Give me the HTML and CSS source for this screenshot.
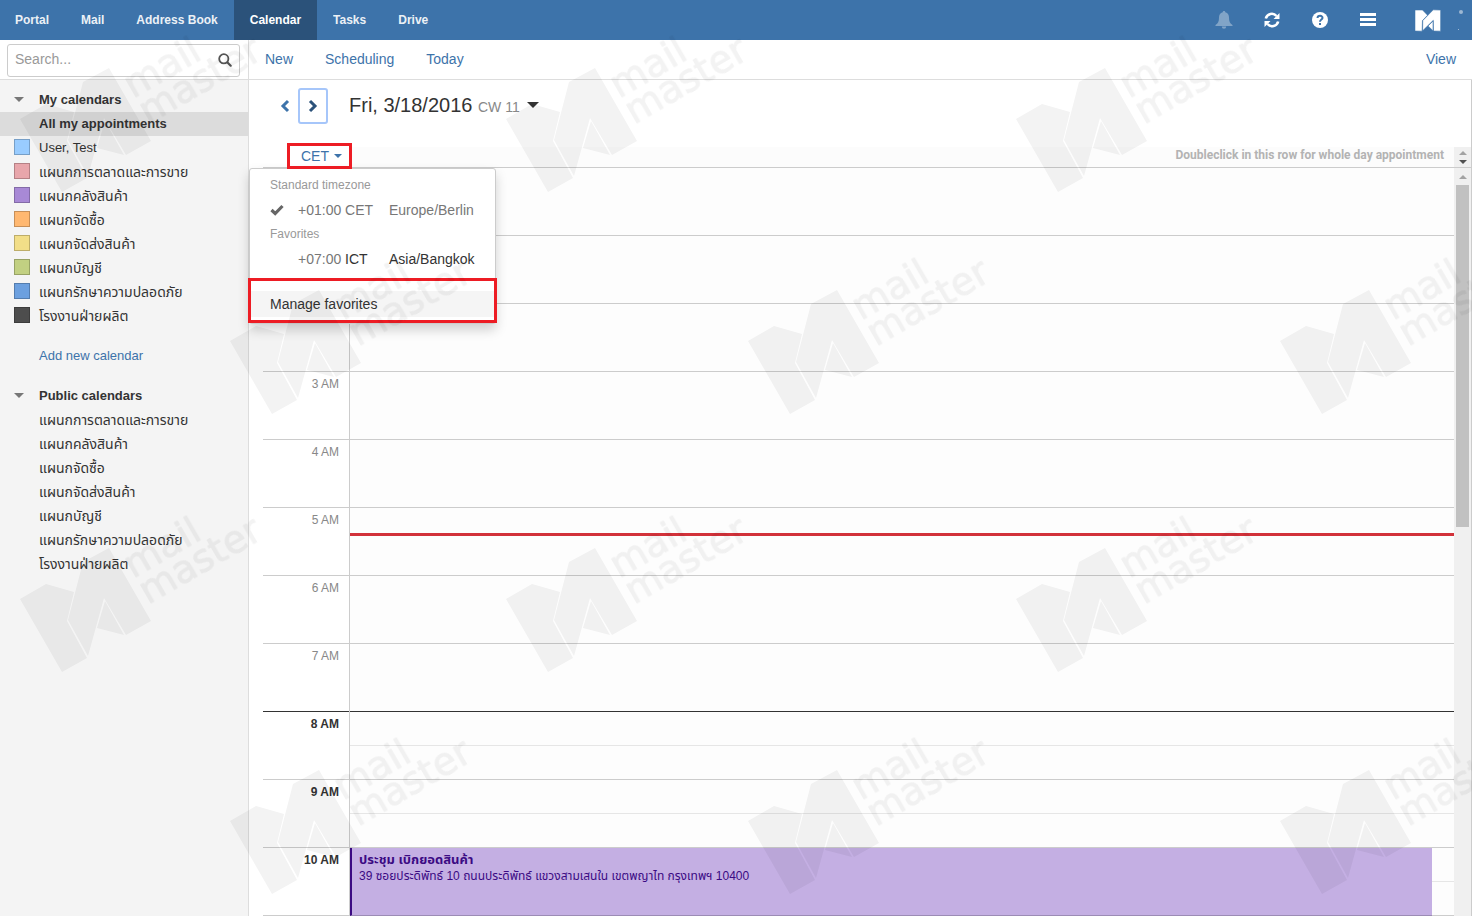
FILE: index.html
```html
<!DOCTYPE html>
<html lang="en">
<head>
<meta charset="utf-8">
<title>Calendar</title>
<link rel="stylesheet" href="styles.css">
</head>
<body>
<header class="topbar">
  <nav class="apps">
    <a href="#">Portal</a><a href="#">Mail</a><a href="#">Address Book</a><a href="#" class="active">Calendar</a><a href="#">Tasks</a><a href="#">Drive</a>
  </nav>
  <div class="tools">
    <button class="tool dim" aria-label="Notifications"><svg width="18" height="20" viewBox="0 0 18 20"><path fill="#fff" d="M9 1c.8 0 1.300.5 1.300 1.200C13 3 14 5 14 7.500c0 4 1 6 3.500 7.500v1H.5v-1C3 13.500 4 11.500 4 7.500 4 5 5 3 7.700 2.200 7.700 1.500 8.200 1 9 1zM6.800 16.500h4.400a2.200 2.200 0 0 1-4.400 0z"/></svg></button>
    <button class="tool" aria-label="Refresh"><svg width="16" height="16" viewBox="0 0 16 16"><path fill="none" stroke="#fff" stroke-width="2.600" d="M1.800 6.500A6.200 6.200 0 0 1 12.500 4M14.200 9.500A6.200 6.200 0 0 1 3.500 12"/><path fill="#fff" d="M15.500 1v6h-6zM.5 15V9h6z"/></svg></button>
    <button class="tool" aria-label="Help"><svg width="16" height="16" viewBox="0 0 16 16"><circle cx="8" cy="8" r="8" fill="#fff"/><path fill="none" stroke="#3d73aa" stroke-width="2" d="M5.500 6C5.700 3 10.800 3.200 10.500 6 10.400 7.700 8 7.500 8 9.800"/><path fill="#3d73aa" d="M7 11h2v2H7z"/></svg></button>
    <button class="tool" aria-label="Menu"><svg width="16" height="14" viewBox="0 0 16 14"><path fill="#fff" d="M0 0h16v3H0zM0 5h16v3H0zM0 10h16v3H0z"/></svg></button>
    <svg class="brand" width="50" height="40" viewBox="0 0 50 40"><path transform="translate(0 10) rotate(30) scale(.25)" fill="#fff" stroke="#3d73aa" stroke-width="2" d="M0 0l26-15 28 8-7 29 20 37-25 14zM63-37l26-14 42 73-25 14L84-1 68 57 48 21zM85 2l19 34-27-7z"/><circle cx="46" cy="12" r="2" fill="#9db8d3"/><path fill="#9db8d3" d="M43 29h1v1h-1z"/></svg>
  </div>
</header>

<div class="layout">
  <aside class="sidebar">
    <form class="search">
      <input type="search" placeholder="Search..." aria-label="Search">
      <svg width="14" height="14" viewBox="0 0 14 14"><circle cx="5.800" cy="5.800" r="4.600" fill="none" stroke="#555" stroke-width="1.800"/><path stroke="#555" stroke-width="2.200" stroke-linecap="round" d="M9.500 9.500l3.200 3.200"/></svg>
    </form>
    <div class="folders">
      <h2><i class="caret"></i>My calendars</h2>
      <ul>
        <li class="selected"><b>All my appointments</b></li>
        <li><i class="swatch blue"></i>User, Test</li>
        <li class="th"><i class="swatch pink"></i>แผนกการตลาดและการขาย</li>
        <li class="th"><i class="swatch purple"></i>แผนกคลังสินค้า</li>
        <li class="th"><i class="swatch orange"></i>แผนกจัดซื้อ</li>
        <li class="th"><i class="swatch yellow"></i>แผนกจัดส่งสินค้า</li>
        <li class="th"><i class="swatch green"></i>แผนกบัญชี</li>
        <li class="th"><i class="swatch navy"></i>แผนกรักษาความปลอดภัย</li>
        <li class="th"><i class="swatch dark"></i>โรงงานฝ่ายผลิต</li>
      </ul>
      <a class="add" href="#">Add new calendar</a>
      <h2><i class="caret"></i>Public calendars</h2>
      <ul class="th">
        <li>แผนกการตลาดและการขาย</li>
        <li>แผนกคลังสินค้า</li>
        <li>แผนกจัดซื้อ</li>
        <li>แผนกจัดส่งสินค้า</li>
        <li>แผนกบัญชี</li>
        <li>แผนกรักษาความปลอดภัย</li>
        <li>โรงงานฝ่ายผลิต</li>
      </ul>
    </div>
  </aside>

  <main class="main">
    <div class="toolbar"><a href="#">New</a><a href="#">Scheduling</a><a href="#">Today</a><a href="#" class="view">View</a></div>
    <div class="datebar">
      <button class="step" aria-label="Previous day"><svg width="10" height="14" viewBox="0 0 10 14"><path fill="none" stroke="#3d73aa" stroke-width="3" d="M8 2L3 7l5 5"/></svg></button>
      <button class="step focused" aria-label="Next day"><svg width="10" height="14" viewBox="0 0 10 14"><path fill="none" stroke="#2b527a" stroke-width="3" d="M2 2l5 5-5 5"/></svg></button>
      <h1>Fri, 3/18/2016 <small>CW 11</small><i class="caret large"></i></h1>
    </div>
    <div class="allday">
      <div class="zone">
        <button class="zone-btn">CET<i class="caret link"></i></button>
        <div class="menu">
          <p class="menu-head">Standard timezone</p>
          <a href="#" class="tz muted"><svg width="14" height="12" viewBox="0 0 14 12"><path fill="none" stroke="#666" stroke-width="3.200" d="M1.500 6L5.200 9.500 12.500 2"/></svg><span class="off">+01:00 CET</span><span>Europe/Berlin</span></a>
          <p class="menu-head">Favorites</p>
          <a href="#" class="tz"><i></i><span class="off"><em>+07:00</em> ICT</span><span>Asia/Bangkok</span></a>
          <div class="manage"><a href="#">Manage favorites</a></div>
        </div>
      </div>
      <div class="hint">Doubleclick in this row for whole day appointment</div>
      <div class="spin"><i class="up"></i><i class="down"></i></div>
    </div>
    <div class="grid">
      <div class="hours">
        <div></div><div></div><div></div><div>3 AM</div><div>4 AM</div><div>5 AM</div><div>6 AM</div><div class="edge">7 AM</div><div class="work">8 AM</div><div class="work">9 AM</div><div class="work">10 AM</div>
      </div>
      <div class="day">
        <div></div><div></div><div></div><div></div><div></div><div></div><div></div><div class="edge"></div><div class="work"></div><div class="work"></div><div class="work"></div>
        <div class="now"></div>
        <article class="event th"><b>ประชุม เบิกยอดสินค้า</b><span>39 ซอยประดิพัทธ์ 10 ถนนประดิพัทธ์ แขวงสามเสนใน เขตพญาไท กรุงเทพฯ 10400</span></article>
      </div>
      <div class="scroll"><i class="up"></i><div class="thumb"></div></div>
    </div>
  </main>
</div>

<svg class="watermark" aria-hidden="true">
  <defs>
    <g id="mark">
      <path d="M0 0l26-15 28 8-7 29 20 37-25 14zM63-37l26-14 42 73-25 14L84-1 68 57 48 21zM85 2l19 34-27-7z"/>
      <g transform="rotate(-30)" class="mark-text"><text x="108" y="39">mail</text><text x="108" y="69">master</text></g>
    </g>
  </defs>
  <g opacity=".05">
    <use href="#mark" x="20" y="119"/><use href="#mark" x="506" y="119"/><use href="#mark" x="1016" y="119"/>
    <use href="#mark" x="230" y="341"/><use href="#mark" x="748" y="341"/><use href="#mark" x="1280" y="341"/>
    <use href="#mark" x="20" y="599"/><use href="#mark" x="506" y="599"/><use href="#mark" x="1016" y="599"/>
    <use href="#mark" x="230" y="821"/><use href="#mark" x="748" y="821"/><use href="#mark" x="1280" y="821"/>
  </g>
</svg>
</body>
</html>
```
FILE: styles.css
```css
* { box-sizing: border-box; }
body { margin: 0; height: 100vh; display: flex; flex-direction: column; overflow: hidden; background: #fff; color: #333; font: 14px/20px "Liberation Sans", Arial, sans-serif; }
a { color: #3d73aa; text-decoration: none; }
button { border: 0; padding: 0; background: none; font: inherit; cursor: pointer; }
ul, p, h1, h2 { margin: 0; padding: 0; list-style: none; }
.th { font-family: "Liberation Sans", Tahoma, "Noto Sans Thai", Loma, Waree, sans-serif; }

.topbar { display: flex; justify-content: space-between; height: 40px; flex: none; background: #3d73aa; }
.apps { display: flex; }
.apps a { padding: 0 16px; color: #fff; font: bold 12px/40px "Liberation Sans", Arial, sans-serif; opacity: .9; }
.apps a:first-child { padding-left: 15px; }
.apps .active { background: #2b527a; opacity: 1; }
.tools { display: flex; align-items: center; }
.tool { display: flex; justify-content: center; width: 48px; }
.dim { opacity: .35; }
.brand { margin-left: 23px; margin-right: 7px; }

.layout { display: flex; flex: 1; min-height: 0; }
.sidebar { width: 249px; flex: none; background: #f4f4f4; border-right: 1px solid #ddd; }
.search { display: flex; align-items: center; height: 40px; padding: 4px 8px 3px 7px; background: #fff; border-bottom: 1px solid #ddd; }
.search input { flex: 1; min-width: 0; height: 33px; padding: 0 30px 3px 7px; border: 1px solid #ccc; border-radius: 3px; font: inherit; background: #fff; }
.search input::placeholder { color: #999; }
.search svg { margin-left: -22px; margin-right: 8px; }
.folders { padding-top: 8px; font-size: 13px; line-height: 24px; }
.folders h2 { display: flex; align-items: center; gap: 15px; padding-left: 14px; font-size: 13px; line-height: 24px; }
.folders li { display: flex; align-items: center; height: 24px; padding-left: 39px; }
.folders .selected { background: #dcdcdc; }
.folders .th { font-size: 14px; }
.folders .add { display: block; margin: 16px 0; padding-left: 39px; }
.swatch { width: 16px; height: 16px; margin: 0 9px 2px -25px; border: 1px solid rgba(0, 0, 0, .22); }
.blue { background: #9cf; }
.pink { background: #e8a6ab; }
.purple { background: #a889d6; }
.orange { background: #ffb871; }
.yellow { background: #f2de88; }
.green { background: #c2d082; }
.navy { background: #6ca0df; }
.dark { background: #4d4d4d; }
.caret { display: inline-block; flex: none; border: 5px solid transparent; border-top-color: #777; border-bottom: 0; }
.folders .caret { margin-bottom: 2px; }

.main { flex: 1; min-width: 0; display: flex; flex-direction: column; }
.toolbar { display: flex; gap: 32px; height: 40px; flex: none; padding: 9px 16px; border-bottom: 1px solid #ddd; }
.view { margin-left: auto; }
.datebar { display: flex; align-items: center; height: 67px; flex: none; padding: 0 0 15px 23px; border-right: 1px solid #ccc; }
.step { display: flex; align-items: center; justify-content: center; width: 26px; height: 36px; }
.focused { width: 30px; border: 2px solid #a6c6fa; border-radius: 3px; }
.datebar h1 { padding-left: 21px; font-size: 20px; line-height: 28px; font-weight: 400; }
.datebar small { color: #888; font-size: 14px; }
.large { margin-left: 7px; vertical-align: 4px; border-width: 6px 6px 0; border-top-color: #333; }
.allday { display: flex; height: 21px; flex: none; margin-left: 14px; border-right: 1px solid #ccc; border-bottom: 1px solid #ccc; }
.zone { position: relative; width: 87px; flex: none; }
.zone-btn { position: absolute; left: 24px; top: -4px; width: 65px; height: 26px; padding-left: 4px; border: 3px solid #ed1c24; color: #3d73aa; z-index: 3; }
.link { margin-left: 5px; vertical-align: 3px; border-width: 4px 4px 0; border-top-color: #3d73aa; }
.hint { flex: 1; padding-right: 10px; background: #fcfcfc; color: #b3b3b3; text-align: right; font: bold 12px/16px Roboto, sans-serif; }
.spin, .scroll { display: flex; flex-direction: column; align-items: center; width: 17px; flex: none; background: #f0f0f0; }
.spin { gap: 5px; padding-top: 4px; }
.up { border: 4px solid transparent; border-top: 0; border-bottom-color: #a3a3a3; }
.down { border: 4px solid transparent; border-bottom: 0; border-top-color: #505050; }

.menu { position: absolute; left: -14px; top: 21px; width: 247px; padding-top: 8px; background: #fff; border: 1px solid #ccc; border-radius: 3px; box-shadow: 0 6px 12px rgba(0, 0, 0, .18); z-index: 2; }
.menu-head { padding-left: 20px; color: #999; font-size: 12px; line-height: 17px; }
.tz { display: flex; align-items: center; height: 32px; padding-left: 20px; color: #333; }
.tz > :first-child { width: 14px; margin-right: 14px; }
.tz .off { width: 91px; }
.muted, .tz em { color: #777; font-style: normal; }
.manage { margin: 3px -2px 0; padding: 10px 0 3px; border: 3px solid #ed1c24; }
.manage a { display: block; padding-left: 19px; background: #f5f5f5; color: #333; line-height: 26px; }

.grid { display: flex; flex: 1; min-height: 0; overflow: hidden; padding-left: 14px; border-right: 1px solid #ccc; }
.hours { width: 87px; flex: none; border-right: 1px solid #ccc; }
.hours div, .day > div:not(.now) { height: 68px; border-bottom: 1px solid #ccc; }
.hours div { padding: 4px 10px 0 0; color: #888; font-size: 12px; line-height: 16px; text-align: right; }
.hours .work { color: #333; font-weight: bold; }
.hours .edge, .day > div.edge:not(.now) { border-bottom-color: #333; }
.day { position: relative; flex: 1; background: #fdfdfd; }
.day .work { background: linear-gradient(#e6e6e6, #e6e6e6) 0 33px / 100% 1px no-repeat; }
.now { position: absolute; left: 0; right: 0; top: 365px; height: 3px; background: #d2323a; }
.event { position: absolute; left: 0; right: 22px; top: 680px; height: 68px; padding: 4px 0 0 7px; border-left: 2px solid #3b0a83; border-bottom: 1px solid #9c8cb5; background: #c4afe3; color: #3b0a83; font-size: 12px; line-height: 16px; }
.event b, .event span { display: block; }
.event b { font-size: 13px; }
.scroll { padding-top: 7px; }
.thumb { width: 13px; height: 342px; margin-top: 6px; background: #c1c1c1; }

.watermark { position: fixed; inset: 0; width: 100%; height: 100%; pointer-events: none; z-index: 5; }
.mark-text { font: 400 38px "DejaVu Sans", sans-serif; stroke: #000; stroke-width: 1px; stroke-linejoin: round; }
```
